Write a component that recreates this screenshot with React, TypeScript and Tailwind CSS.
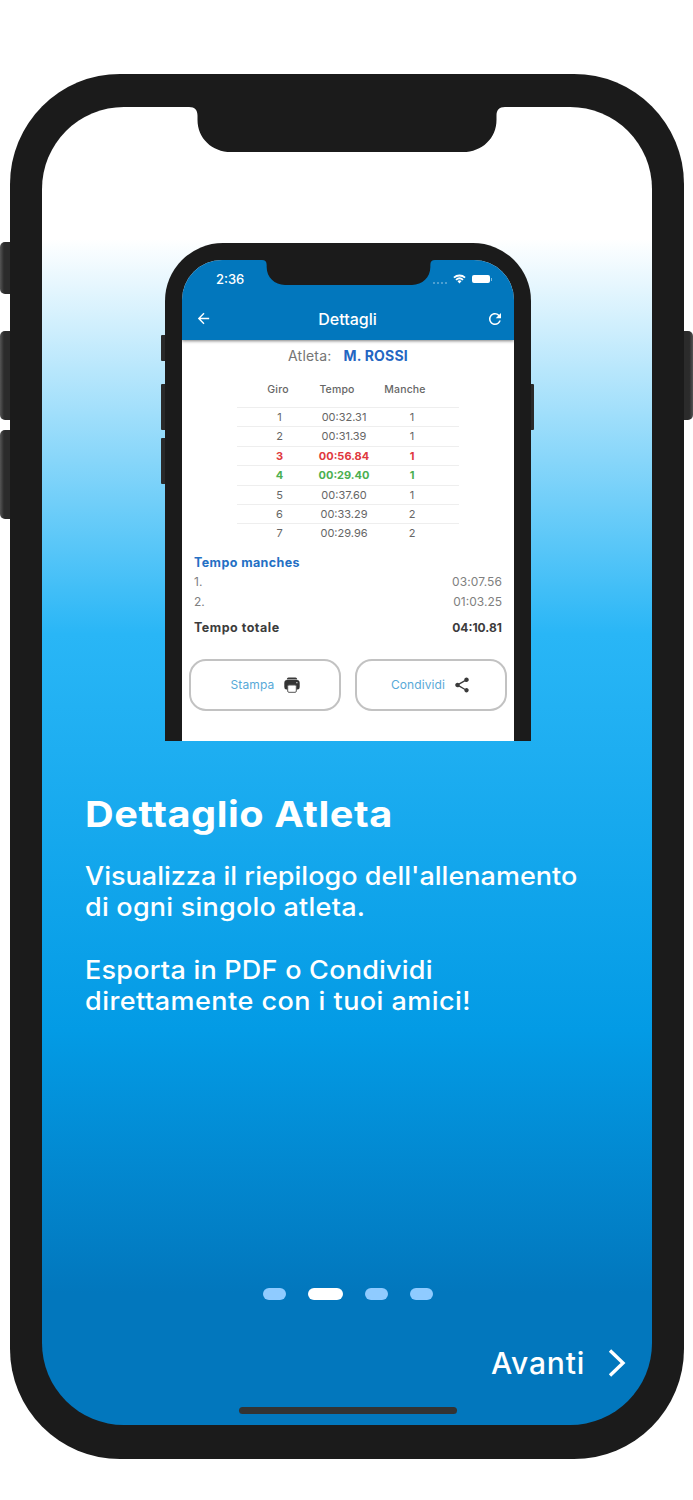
import React from 'react';
import { MdArrowBack, MdRefresh, MdShare } from 'react-icons/md';
import clsx from 'clsx';

const laps = [
  { lap: 1, time: '00:32.31', heat: 1 },
  { lap: 2, time: '00:31.39', heat: 1 },
  { lap: 3, time: '00:56.84', heat: 1, mark: 'slow' },
  { lap: 4, time: '00:29.40', heat: 1, mark: 'fast' },
  { lap: 5, time: '00:37.60', heat: 1 },
  { lap: 6, time: '00:33.29', heat: 2 },
  { lap: 7, time: '00:29.96', heat: 2 },
];

const Notch: React.FC<{ className: string }> = ({ className }) => (
  <svg viewBox="0 0 316 46" preserveAspectRatio="none" className={className} fill="#1b1b1b">
    <path d="M0 0 C6 0 8.500 3 8.500 9 V13 C8.500 32 23 46 42 46 H274 C293 46 307.500 32 307.500 13 V9 C307.500 3 310 0 316 0 Z" />
  </svg>
);

const WifiIcon = () => (
  <svg viewBox="0 0 14 10" className="w-[13px] h-[10px]" fill="none" stroke="white" strokeWidth="2">
    <path d="M1 3.500 C4.500 0.400 9.500 0.400 13 3.500" />
    <path d="M3.200 5.900 C5.500 3.900 8.500 3.900 10.800 5.900" />
    <path d="M4.700 7.200 Q7 5.500 9.300 7.200 L7 9.800 Z" fill="white" stroke="none" />
  </svg>
);

const PrinterIcon = () => (
  <svg viewBox="0 0 16 16" className="w-4 h-4">
    <path d="M4.500 0.500 H11.500 Q13 0.500 13.300 2.500 H2.700 Q3 0.500 4.500 0.500 Z" fill="#3a3a3a" />
    <path d="M3 3 H13 Q15.700 3 15.700 6 V10 Q15.700 12.500 13.500 12.500 H2.500 Q0.300 12.500 0.300 10 V6 Q0.300 3 3 3 Z" fill="#333" />
    <rect x="3.700" y="8" width="8.600" height="7.300" rx="1.200" fill="white" stroke="#555" strokeWidth="1" />
    <circle cx="12.900" cy="5.700" r="0.600" fill="white" />
  </svg>
);

const DetailScreen: React.FC = () => (
  <div className="w-[332px] h-[481px] bg-white rounded-t-[40px] overflow-hidden">
    <div className="h-20 bg-[#0277bd] text-white shadow-[0_1px_3px_rgba(0,0,0,0.5)]">
      <div className="flex h-[37px] items-start">
        <span className="w-[80px] pl-[34px] pt-[11px] text-[13px] leading-[17px] font-medium">2:36</span>
        <Notch className="w-[173px] h-[25px]" />
        <div className="flex items-center pt-[14px] h-[24px]">
          <span className="flex gap-[2px] mt-[7px] mr-[6px] -ml-[2px]">
            {[0, 1, 2, 3].map((i) => (
              <i key={i} className="w-[2px] h-[2px] rounded-full bg-white/40" />
            ))}
          </span>
          <WifiIcon />
          <span className="ml-[6px] w-[18px] h-[8px] rounded-[2px] bg-white" />
          <span className="ml-[1px] w-[1px] h-[3px] bg-white/50" />
        </div>
      </div>
      <div className="flex h-[43px] items-center justify-between pl-[13px] pr-[10px]">
        <MdArrowBack className="w-[17px] h-[17px] stroke-white" />
        <span className="-ml-[3px] text-[16px] leading-5 font-medium">Dettagli</span>
        <MdRefresh className="w-[18px] h-[18px] stroke-white" />
      </div>
    </div>

    <div className="flex justify-center gap-[12px] pt-[6px] text-[14px] leading-5">
      <span className="text-[#757575] tracking-[0.2px]">Atleta:</span>
      <span className="font-bold text-[#2466c2] tracking-[0.2px]">M. ROSSI</span>
    </div>

    <div className="ml-[55px] w-[222px] mt-[14px] text-[11px] text-center text-[#666]">
      <div className="flex h-[27px] leading-5 text-[10.500px] tracking-[0.150px] font-medium">
        <span className="w-[82px]">Giro</span>
        <span className="w-[36px]">Tempo</span>
        <span className="w-[100px]">Manche</span>
      </div>
      {laps.map((row) => (
        <div
          key={row.lap}
          className={clsx(
            'flex h-[19.400px] items-center border-t border-[#eee]',
            row.mark === 'slow' && 'font-bold text-[#e0393e]',
            row.mark === 'fast' && 'font-bold text-[#4caf50]',
          )}
        >
          <span className="w-[85px]">{row.lap}</span>
          <span className="w-[44px] flex justify-center whitespace-nowrap">{row.time}</span>
          <span className="w-[92px]">{row.heat}</span>
        </div>
      ))}
    </div>

    <div className="px-[12px] pt-[10px] text-[12px] leading-[19.400px] text-[#808080]">
      <p className="font-bold text-[#2470c4] text-[12.500px] tracking-[0.400px]">Tempo manches</p>
      <div className="flex justify-between"><span>1.</span><span className="tracking-[0.100px]">03:07.56</span></div>
      <div className="flex justify-between"><span>2.</span><span>01:03.25</span></div>
      <div className="flex justify-between mt-[7px] font-bold text-[#3c3c3c]">
        <span className="text-[12.500px] tracking-[0.500px]">Tempo totale</span>
        <span>04:10.81</span>
      </div>
    </div>

    <div className="flex gap-[14px] px-[7px] mt-[22px] text-[12px] text-[#58a9d8]">
      <button className="w-[152px] h-[52px] flex items-center justify-center gap-[9px] rounded-[17px] border-2 border-[#c2c2c2] tracking-[0.150px]">
        Stampa <PrinterIcon />
      </button>
      <button className="w-[152px] h-[52px] flex items-center justify-center gap-[8px] rounded-[17px] border-2 border-[#c2c2c2] tracking-[0.100px]">
        Condividi <MdShare className="w-[18px] h-[18px] text-[#3a3a3a]" />
      </button>
    </div>
  </div>
);

const PreviewPhone: React.FC = () => (
  <div className="flex pl-[119px] mt-[91px] h-[498px]">
    <div className="flex flex-col pt-[92px] gap-2">
      <i className="w-1 h-[26px] mb-[15px] bg-[#292929] rounded-l-[1px]" />
      <i className="w-1 h-[46px] bg-[#292929] rounded-l-[1px]" />
      <i className="w-1 h-[46px] bg-[#292929] rounded-l-[1px]" />
    </div>
    <div className="w-[366px] bg-[#1b1b1b] rounded-t-[58px] pt-[17px] px-[17px]">
      <DetailScreen />
    </div>
    <i className="w-[3px] h-[46px] mt-[141px] bg-[#292929] rounded-r-[1px]" />
  </div>
);

export default function App() {
  return (
    <div className="w-[693px] h-[1500px] flex bg-white pt-[74px] font-['Inter',sans-serif] overflow-hidden">
      <div className="flex flex-col w-[10px] pt-[168px]">
        <i className="h-[52px] rounded-l-[5px] bg-gradient-to-r from-[#555] to-[#2b2b2b] to-40%" />
        <i className="h-[89px] mt-[37px] rounded-l-[5px] bg-gradient-to-r from-[#555] to-[#2b2b2b] to-40%" />
        <i className="h-[89px] mt-[10px] rounded-l-[5px] bg-gradient-to-r from-[#555] to-[#2b2b2b] to-40%" />
      </div>

      <div className="w-[674px] h-[1385px] shrink-0 bg-[#1b1b1b] rounded-[110px] pt-[33px] px-[32px]">
        <div className="w-[610px] h-[1318px] flex flex-col rounded-[82px] overflow-hidden bg-[linear-gradient(to_bottom,#fff_10%,#29b6f6_40%,#039be5_70%,#0277bd_90%)] text-white">
          <Notch className="w-[316px] h-[45px] self-center" />
          <PreviewPhone />

          <div className="pl-[43px] whitespace-nowrap">
            <h1 className="mt-[51px] text-[36px] leading-[44px] font-bold tracking-[0.500px] origin-left scale-x-[1.103]">Dettaglio Atleta</h1>
            <div className="mt-[24px] flex flex-col gap-[31.200px] text-[25.500px] leading-[31.200px] font-medium origin-left scale-x-[1.060]">
              <p>
                Visualizza il riepilogo dell'allenamento<br />
                <span className="tracking-[0.200px]">di ogni singolo atleta.</span>
              </p>
              <p>
                <span className="tracking-[0.200px]">Esporta in PDF o Condividi</span><br />
                <span className="tracking-[0.420px]">direttamente con i tuoi amici!</span>
              </p>
            </div>
          </div>

          <div className="flex justify-center gap-[22px] mt-[272px] pl-[1px]">
            <i className="w-[23px] h-3 rounded-full bg-[#8fcbff]" />
            <i className="w-[35px] h-3 rounded-full bg-white" />
            <i className="w-[23px] h-3 rounded-full bg-[#8fcbff]" />
            <i className="w-[23px] h-3 rounded-full bg-[#8fcbff]" />
          </div>

          <button className="self-end flex items-center gap-[23px] mt-[43px] mr-[26px] text-[30px] leading-[40px] font-medium tracking-[0.800px]">
            Avanti
            <svg viewBox="0 0 18 28" className="w-[18px] h-[28px]" fill="none" stroke="white" strokeWidth="3.400">
              <path d="M2 1.500 L15 14 L2 26.500" />
            </svg>
          </button>
          <div className="self-center w-[218px] h-[7px] mt-[24px] ml-[2px] rounded-full bg-[#333]" />
        </div>
      </div>

      <i className="w-[9px] h-[89px] mt-[257px] rounded-r-[5px] bg-gradient-to-l from-[#555] to-[#2b2b2b] to-40%" />
    </div>
  );
}
